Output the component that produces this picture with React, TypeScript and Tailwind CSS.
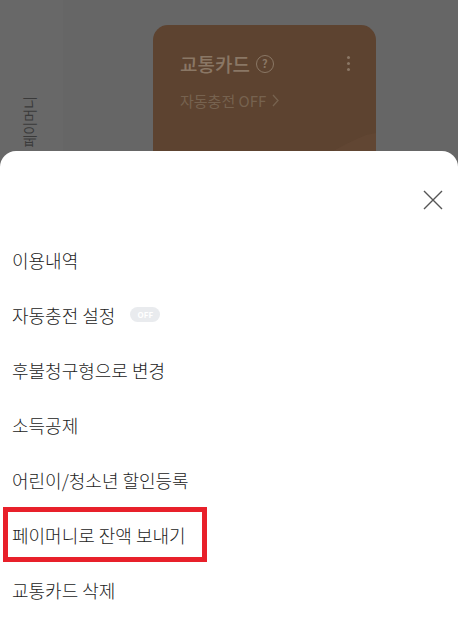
const items = [
  '이용내역',
  '자동충전 설정',
  '후불청구형으로 변경',
  '소득공제',
  '어린이/청소년 할인등록',
  '페이머니로 잔액 보내기',
  '교통카드 삭제',
]

export default function App() {
  return (
    <div
      className="relative w-[458px] h-[633px] overflow-hidden bg-[#666666]"
      style={{ fontFamily: '"Noto Sans CJK KR", "Noto Sans", sans-serif' }}
    >
      {/* Dimmed page behind the sheet */}
      <div className="flex h-[160px]">
        <div className="w-[63px] bg-[#686868] pl-[22px] pt-[96px]">
          <span className="inline-block [writing-mode:vertical-rl] [text-orientation:sideways] rotate-180 text-[14px] leading-none text-[#3a3a3a] whitespace-nowrap">
            페이머니
          </span>
        </div>
        <div className="flex-1 pl-[90px] pt-[25px]">
          <div className="relative w-[223px] h-[160px] rounded-[15px] bg-[#5d4330] px-[27px] pt-[29px] overflow-hidden">
            <div className="flex items-center justify-between">
              <div className="flex items-center gap-[6px]">
                <span className="text-[19px] font-medium leading-none text-[#8a7765]">교통카드</span>
                <span className="w-[18px] h-[18px] rounded-full border-[1.5px] border-[#8a7765] text-[#8a7765] text-[11px] font-bold leading-none flex items-center justify-center">
                  ?
                </span>
              </div>
              <div className="flex flex-col gap-[3px] mr-[-1px]">
                <span className="w-[3px] h-[3px] rounded-full bg-[#8a7765]" />
                <span className="w-[3px] h-[3px] rounded-full bg-[#8a7765]" />
                <span className="w-[3px] h-[3px] rounded-full bg-[#8a7765]" />
              </div>
            </div>
            <div className="mt-[20px] flex items-center gap-[5px] text-[15px] leading-none text-[#76624f]">
              자동충전 OFF
              <svg width="8" height="13" viewBox="0 0 8 13" fill="none" stroke="#76624f" strokeWidth="1.3">
                <path d="M2 1l5 5.5-5 5.5" />
              </svg>
            </div>
            <svg className="absolute right-0 bottom-0" width="90" height="60" viewBox="0 0 90 60" fill="none">
              <path d="M0 60 C30 35 55 20 80 10 L90 8 L90 60 Z" fill="#614633" />
            </svg>
          </div>
        </div>
      </div>

      {/* Bottom sheet */}
      <div className="absolute left-0 right-0 top-[151px] bottom-0 bg-white rounded-t-[16px]">
        <div className="h-[81px] flex justify-end pt-[39px] pr-[15px]">
          <svg width="20" height="20" viewBox="0 0 20 20" fill="none" stroke="#555555" strokeWidth="1.4">
            <path d="M1 1l18 18M19 1L1 19" />
          </svg>
        </div>
        <ul>
          {items.map((label, i) => (
            <li key={label} className="relative h-[55px] flex items-center px-[12px]">
              <span className="text-[18px] font-light text-[#222222] leading-none">{label}</span>
              {i === 1 && (
                <span className="ml-[15px] w-[30px] h-[15px] rounded-full bg-[#e9ebee] text-white text-[8px] font-bold flex items-center justify-center leading-none">
                  OFF
                </span>
              )}
              {i === 5 && (
                <span className="absolute left-[3px] top-0 w-[204px] h-[55px] border-[5px] border-[#e8202a]" />
              )}
            </li>
          ))}
        </ul>
      </div>
    </div>
  )
}
